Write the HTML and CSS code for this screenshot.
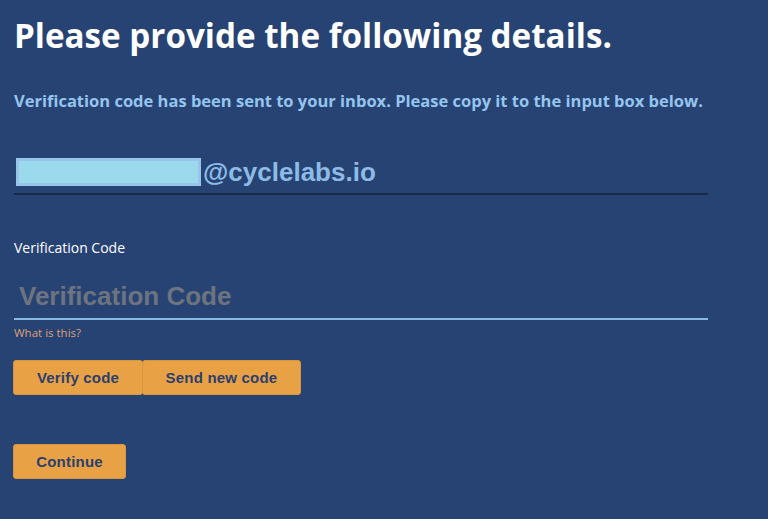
FILE: index.html
```html
<!DOCTYPE html>
<html lang="en">
<head>
<meta charset="utf-8">
<title>Verification</title>
<link rel="stylesheet" href="styles.css">
</head>
<body>
<main class="page">
  <h1 class="title">Please provide the following details.</h1>
  <p class="intro">Verification code has been sent to your inbox. Please copy it to the input box below.</p>
  <div class="email-field">
    <span class="email-mask"></span><span class="email-domain">@cyclelabs.io</span>
  </div>
  <label class="field-label" for="code">Verification Code</label>
  <div class="code-field">
    <input id="code" class="code-input" type="text" placeholder="Verification Code">
  </div>
  <a class="help-link">What is this?</a>
  <div class="button-row">
    <button class="btn">Verify code</button><button class="btn btn-send">Send new code</button>
  </div>
  <div class="continue-row">
    <button class="btn btn-continue">Continue</button>
  </div>
</main>
</body>
</html>
```

FILE: styles.css
```css
html, body {
  margin: 0;
  padding: 0;
  background: #274373;
}
.page {
  padding: 0 0 0 14px;
  width: 694px;
  font-family: "Open Sans", "Noto Sans", sans-serif;
}
.title {
  margin: 0;
  padding-top: 14px;
  font-size: 33.2px;
  line-height: 44px;
  font-weight: 700;
  color: #ffffff;
}
.intro {
  margin: 0;
  padding-top: 32px;
  font-size: 16.5px;
  line-height: 22px;
  font-weight: 700;
  color: #95c5ee;
  white-space: nowrap;
}
.email-field {
  margin-top: 46px;
  height: 35px;
  display: flex;
  align-items: flex-start;
  border-bottom: 2px solid #1a2947;
}
.email-mask {
  display: block;
  margin-left: 2px;
  width: 179px;
  height: 22px;
  background: #9bd9ec;
  border: 3px solid #98c4ea;
}
.email-domain {
  font-family: "Liberation Sans", Arial, sans-serif;
  font-weight: 700;
  font-size: 26px;
  line-height: 28px;
  color: #8dbbe6;
  margin-left: 2px;
}
.field-label {
  display: block;
  margin-top: 44px;
  font-size: 14px;
  line-height: 18px;
  color: #ffffff;
}
.code-field {
  margin-top: 17px;
  border-bottom: 2px solid #8ab8e2;
}
.code-input {
  display: block;
  width: 100%;
  box-sizing: border-box;
  border: 0;
  background: transparent;
  padding: 0 0 0 5px;
  height: 44px;
  font-family: "Liberation Sans", Arial, sans-serif;
  font-weight: 700;
  font-size: 26px;
  color: #ffffff;
  outline: none;
}
.code-input::placeholder {
  color: #6d7480;
}
.help-link {
  display: block;
  margin-top: 6px;
  font-size: 11.5px;
  line-height: 14px;
  color: #dea078;
}
.button-row {
  display: flex;
  margin-top: 20px;
}
.btn {
  font-family: "Liberation Sans", Arial, sans-serif;
  font-weight: 700;
  font-size: 15px;
  letter-spacing: 0.2px;
  color: #2c3f6e;
  background: #e8a245;
  border: 1px solid #d8963f;
  border-radius: 3px;
  height: 35px;
  padding: 0 22px;
  margin-left: -1px;
  cursor: pointer;
}
.button-row .btn:first-child {
  margin-left: -1px;
  width: 130px;
}
.btn-send {
  width: 159px;
}
.continue-row {
  margin-top: 49px;
  display: flex;
}
.btn-continue {
  width: 113px;
}
```
